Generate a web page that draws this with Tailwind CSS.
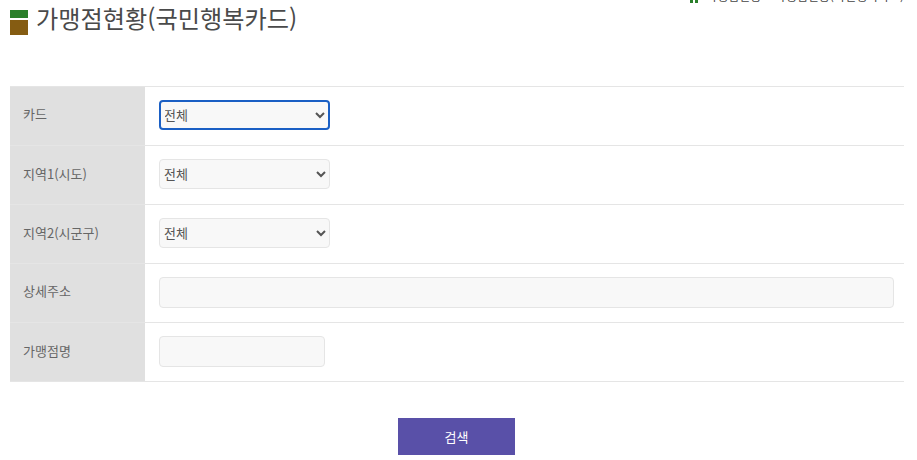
<!DOCTYPE html>
<html lang="ko">
<head>
  <meta charset="UTF-8">
  <title>가맹점현황(국민행복카드)</title>
  <script src="https://cdn.jsdelivr.net/npm/@tailwindcss/browser@4"></script>
</head>
<body class="bg-white text-[#666] overflow-hidden font-['Noto_Sans_CJK_KR','Noto_Sans',sans-serif]">
  <div class="h-[460px] w-[917px] overflow-hidden relative">
    <!-- breadcrumb, cut off by the top of the page -->
    <div class="absolute left-[690px] top-[-14px] flex items-end gap-[8px] text-[12px] leading-[15px] text-[#444] whitespace-nowrap">
      <svg width="8" height="17" viewBox="0 0 8 17"><path d="M0 8 4 3 8 8V17H5V11H3V17H0Z" fill="#2a7f2a"/></svg>
      <span>가맹점현황 &gt; 가맹점현황(국민행복카드)</span>
    </div>

    <!-- title -->
    <div class="flex items-start pl-2.5 h-[86px]">
      <div class="w-[18px] mt-[10px] mr-2 shrink-0">
        <div class="h-[8px] bg-[#2a7f2a]"></div>
        <div class="h-[15px] mt-[2px] bg-[#855c12]"></div>
      </div>
      <h1 class="text-[24.2px] leading-[36px] text-[#4a4a4a]">가맹점현황(국민행복카드)</h1>
    </div>

    <!-- search form -->
    <div class="ml-2.5 w-[894px] border-t border-[#e5e5e5] text-[13px]">
      <div class="flex h-[59px] border-b border-[#e5e5e5]">
        <div class="w-[135px] bg-[#e0e0e0] pl-[13px] pb-[4px] flex items-center">카드</div>
        <div class="flex-1 pl-[14px] pb-[2px] flex items-center">
          <select class="w-[171px] h-[30px] pl-0 pb-[2px] -indent-px bg-[#f8f8f8] border-2 border-[#1a5fc4] rounded-[4px] text-[13px] text-[#555]"><option>전체</option></select>
        </div>
      </div>
      <div class="flex h-[59px] border-b border-[#e5e5e5]">
        <div class="w-[135px] bg-[#e0e0e0] pl-[13px] pb-[3px] flex items-center">지역1(시도)</div>
        <div class="flex-1 pl-[14px] pb-[2px] flex items-center">
          <select class="w-[171px] h-[30px] pl-0 pb-[2px] bg-[#f8f8f8] border border-[#e5e5e5] rounded-[4px] text-[13px] text-[#555]"><option>전체</option></select>
        </div>
      </div>
      <div class="flex h-[59px] border-b border-[#e5e5e5]">
        <div class="w-[135px] bg-[#e0e0e0] pl-[13px] pb-[3px] flex items-center">지역2(시군구)</div>
        <div class="flex-1 pl-[14px] pb-[2px] flex items-center">
          <select class="w-[171px] h-[30px] pl-0 pb-[2px] bg-[#f8f8f8] border border-[#e5e5e5] rounded-[4px] text-[13px] text-[#555]"><option>전체</option></select>
        </div>
      </div>
      <div class="flex h-[59px] border-b border-[#e5e5e5]">
        <div class="w-[135px] bg-[#e0e0e0] pl-[13px] pb-[4px] flex items-center">상세주소</div>
        <div class="flex-1 pl-[14px] pr-[10px] pb-[2px] flex items-center">
          <input type="text" class="w-full h-[31px] bg-[#f8f8f8] border border-[#e5e5e5] rounded-[4px]">
        </div>
      </div>
      <div class="flex h-[59px] border-b border-[#e5e5e5]">
        <div class="w-[135px] bg-[#e0e0e0] pl-[13px] pb-[3px] flex items-center">가맹점명</div>
        <div class="flex-1 pl-[14px] pb-[2px] flex items-center">
          <input type="text" class="w-[166px] h-[31px] bg-[#f8f8f8] border border-[#e5e5e5] rounded-[4px]">
        </div>
      </div>
    </div>

    <div class="mt-[36px] ml-[398px]">
      <button class="w-[117px] h-[37px] bg-[#5950a8] text-white text-[13px]">검색</button>
    </div>
  </div>
</body>
</html>
